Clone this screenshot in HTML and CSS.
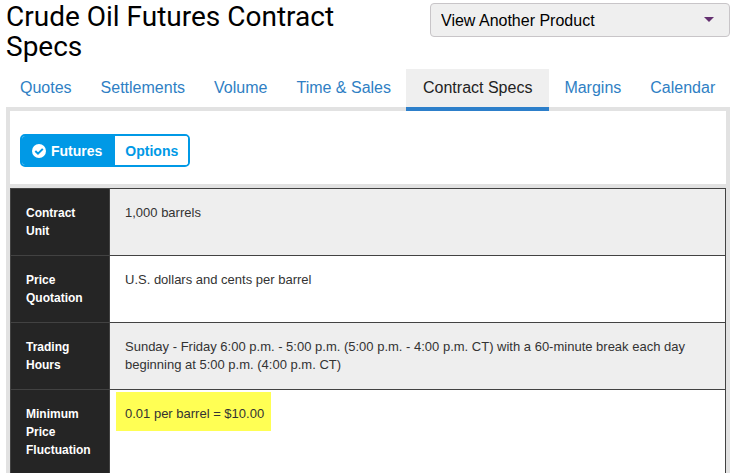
FILE: index.html
```html
<!DOCTYPE html>
<html lang="en">
<head>
<meta charset="utf-8">
<title>Crude Oil Futures Contract Specs</title>
<link rel="stylesheet" href="styles.css">
</head>
<body>
<header class="page-header">
  <h1 class="title">Crude Oil Futures Contract Specs</h1>
  <div class="product-picker">
    <select class="product-select" aria-label="View Another Product">
      <option>View Another Product</option>
    </select>
    <svg class="caret" viewBox="0 0 10 5" aria-hidden="true"><path d="M0 0h10L5 5z"/></svg>
  </div>
</header>
<nav class="tabs">
  <a class="tab" href="#">Quotes</a>
  <a class="tab" href="#">Settlements</a>
  <a class="tab" href="#">Volume</a>
  <a class="tab" href="#">Time &amp; Sales</a>
  <a class="tab tab-active" href="#" aria-current="page">Contract Specs</a>
  <a class="tab" href="#">Margins</a>
  <a class="tab" href="#">Calendar</a>
</nav>
<main class="panel">
  <div class="toolbar">
    <div class="toggle">
      <button class="toggle-button toggle-on" type="button" aria-pressed="true">
        <svg class="check" viewBox="0 0 14 14" aria-hidden="true"><circle cx="7" cy="7" r="7"/><path d="M3.3 7l2.7 2.7 4.8-4.8"/></svg>
        <span>Futures</span>
      </button>
      <button class="toggle-button" type="button" aria-pressed="false">Options</button>
    </div>
  </div>
  <table class="specs">
    <tbody>
      <tr><th scope="row">Contract Unit</th><td>1,000 barrels</td></tr>
      <tr><th scope="row">Price Quotation</th><td>U.S. dollars and cents per barrel</td></tr>
      <tr><th scope="row">Trading Hours</th><td>Sunday - Friday 6:00 p.m. - 5:00 p.m. (5:00 p.m. - 4:00 p.m. CT) with a 60-minute break each day beginning at 5:00 p.m. (4:00 p.m. CT)</td></tr>
      <tr><th scope="row">Minimum Price Fluctuation</th><td><mark class="highlight">0.01 per barrel = $10.00</mark></td></tr>
    </tbody>
  </table>
</main>
</body>
</html>
```
FILE: styles.css
```css
* {
  box-sizing: border-box;
}

body {
  margin: 0;
  padding: 0 1px 0 6px;
  height: 100vh;
  overflow: hidden;
  background: #fff;
  color: #333;
  font-family: "Liberation Sans", Arial, sans-serif;
  font-size: 16px;
}

.page-header {
  display: flex;
  justify-content: space-between;
  align-items: flex-start;
  gap: 24px;
  height: 69px;
}

.title {
  flex: 1;
  margin: 0;
  padding-top: 2px;
  color: #000;
  font-family: Roboto, sans-serif;
  font-size: 28px;
  font-weight: 400;
  line-height: 30px;
}

.product-picker {
  position: relative;
  width: 300px;
  margin-top: 3px;
}

.product-select {
  display: block;
  width: 100%;
  height: 34px;
  padding: 0 36px 0 10px;
  border: 1px solid #c8c5c8;
  border-radius: 4px;
  background: #efefef;
  color: #000;
  font: inherit;
  appearance: none;
}

.caret {
  position: absolute;
  top: 14px;
  right: 16px;
  width: 10px;
  height: 5px;
  fill: #643070;
  pointer-events: none;
}

.tabs {
  display: flex;
  gap: 1px;
}

.tab {
  padding: 0 14px;
  height: 38px;
  color: #2f7fc4;
  line-height: 37px;
  text-decoration: none;
  white-space: nowrap;
}

.tab-active {
  position: relative;
  height: 42px;
  margin-bottom: -4px;
  padding: 0 17px;
  border-bottom: 4px solid #2d7fca;
  background: #efefef;
  color: #222;
}

.panel {
  border: 4px solid #e2e2e2;
}

.toolbar {
  padding: 23px 10px 17px;
  border-bottom: 4px solid #e2e2e2;
}

.toggle {
  display: inline-flex;
  vertical-align: top;
  height: 33px;
  overflow: hidden;
  border: 2px solid #0099e6;
  border-radius: 5px;
}

.toggle-button {
  display: flex;
  align-items: center;
  gap: 5px;
  padding: 0 10px;
  border: 0;
  background: #fff;
  color: #0099e6;
  font: bold 14px "Liberation Sans", Arial, sans-serif;
}

.toggle-on {
  padding: 0 13px 0 10px;
  background: #0099e6;
  color: #fff;
}

.check {
  width: 14px;
  height: 14px;
  fill: #fff;
}

.check path {
  fill: none;
  stroke: #0099e6;
  stroke-width: 2;
}

.specs {
  width: 100%;
  border-collapse: collapse;
  font-size: 13px;
  line-height: 18px;
}

.specs th,
.specs td {
  padding: 15px;
  border: 1px solid #424242;
  text-align: left;
  vertical-align: top;
}

.specs th {
  width: 99px;
  background: #252525;
  color: #fff;
  font-size: 12px;
}

.specs tr:nth-child(odd) td {
  background: #eee;
}

.highlight {
  display: inline-block;
  margin: -13px -9px;
  padding: 13px 7px 8px 9px;
  background: #ffff54;
  color: #333;
}
```
